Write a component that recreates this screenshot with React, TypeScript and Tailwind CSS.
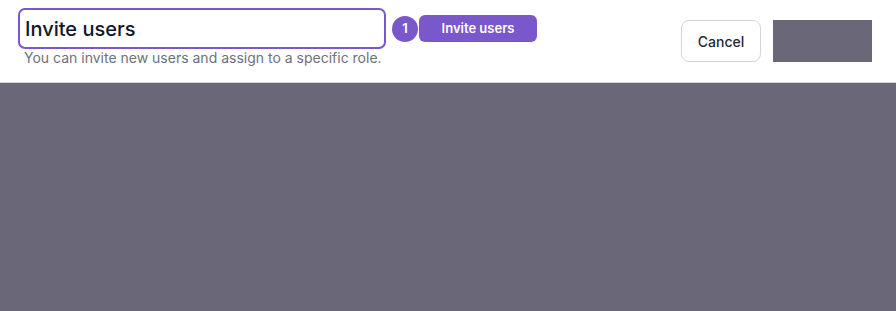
export default function App() {
  return (
    <div className="flex h-[311px] w-[896px] flex-col bg-[#6a6878] font-['Inter',sans-serif]">
      <header className="flex h-[83px] items-start justify-between border-b border-[#d4d3dc] bg-white pl-[18px] pr-[24px]">
        <div className="flex flex-col pt-[8px]">
          <div className="flex items-center">
            <div className="flex h-[41px] w-[368px] items-center rounded-[7px] border-2 border-[#7a58cc] px-[5px] text-[20px] font-medium text-[#111827]">
              Invite users
            </div>
            <span className="ml-[6px] flex h-[26px] w-[26px] items-center justify-center rounded-full bg-[#7a58cc] text-[13px] font-semibold text-white">
              1
            </span>
            <button className="ml-[1px] h-[27px] w-[118px] rounded-[6px] bg-[#7a58cc] text-[13px] font-semibold text-white">
              Invite users
            </button>
          </div>
          <p className="pl-[6px] text-[14px] leading-[18px] text-[#6b7280]">
            You can invite new users and assign to a specific role.
          </p>
        </div>
        <div className="flex gap-[12px] pt-[20px]">
          <button className="h-[42px] w-[80px] rounded-[8px] border border-[#d4d3dc] bg-white text-[14px] font-medium text-[#1f2937]">
            Cancel
          </button>
          <div className="h-[42px] w-[99px] bg-[#6a6878]" />
        </div>
      </header>
      <main className="flex-1" />
    </div>
  )
}
